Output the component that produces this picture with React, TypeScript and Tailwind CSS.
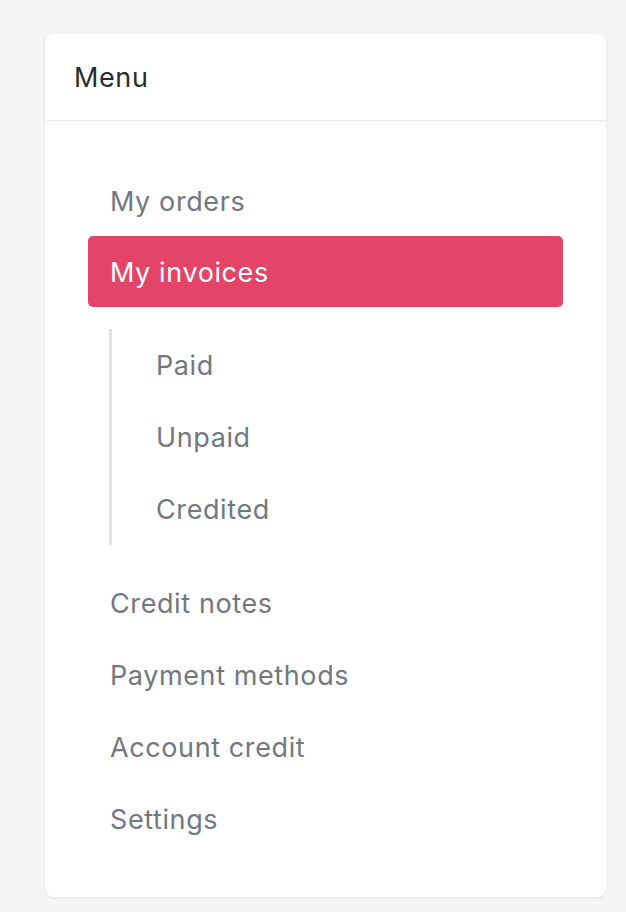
import React from "react";

const after = ["Credit notes", "Payment methods", "Account credit", "Settings"];
const subs = ["Paid", "Unpaid", "Credited"];

export default function App() {
  return (
    <div className="min-h-[912px] bg-[#f4f5f7] pt-[34px] pl-[45px] pr-[20px] pb-[15px] tracking-[0.6px]" style={{ fontFamily: "Inter, 'Noto Sans', sans-serif" }}>
      <div className="w-[561px] rounded-[9px] bg-white shadow-[0_1px_3px_rgba(0,0,0,0.08)]">
        <div className="flex h-[87px] items-center border-b border-[#ececee] pl-[29px] pt-[2px] text-[27px] text-[#2b2b2b] shadow-[0_3px_6px_rgba(0,0,0,0.04)]">
          Menu
        </div>
        <div className="flex flex-col px-[43px] pt-[44px] pb-[42px] text-[27px] text-[#737780]">
          <div className="flex h-[71px] items-center pl-[22px] pt-[3px]">My orders</div>
          <div className="flex h-[71px] items-center rounded-[5px] bg-[#e44467] pl-[22px] pt-[3px] text-white">My invoices</div>
          <div className="my-[22px] ml-[21px] flex flex-col border-l-[3px] border-[#e2e2e4]">
            {subs.map((s) => (
              <div key={s} className="flex h-[72px] items-center pl-[44px] pt-[3px]">{s}</div>
            ))}
          </div>
          {after.map((s) => (
            <div key={s} className="flex h-[72px] items-center pl-[22px] pt-[3px]">{s}</div>
          ))}
        </div>
      </div>
    </div>
  );
}
